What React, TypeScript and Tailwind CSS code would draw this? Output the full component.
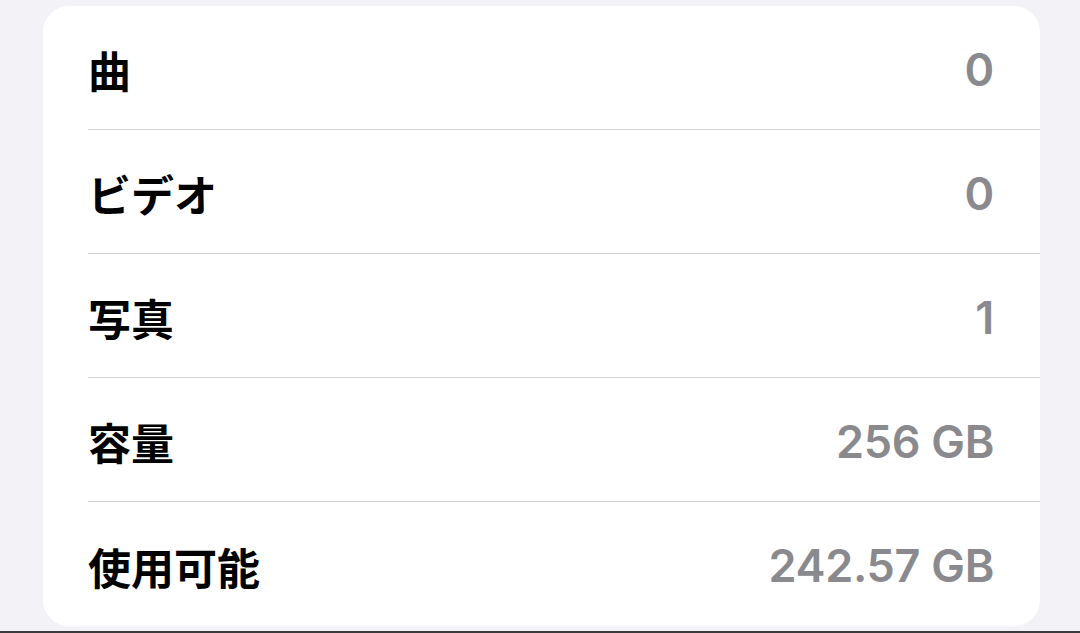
const rows = [
  { label: '曲', value: '0' },
  { label: 'ビデオ', value: '0' },
  { label: '写真', value: '1' },
  { label: '容量', value: '256 GB' },
  { label: '使用可能', value: '242.57 GB' },
];

export default function App() {
  return (
    <div className="flex h-[633px] w-[1080px] flex-col bg-[#f2f2f7]">
      <div className="flex-1 pt-[6px]">
        <div className="ml-[43px] w-[997px] overflow-hidden rounded-[26px] bg-white">
          {rows.map((row, i) => (
            <div key={row.label}>
              {i > 0 && <div className="ml-[45px] h-px bg-[#d1d1d6]" />}
              <div
                className={`flex items-center justify-between pl-[45px] pr-[46px] pt-[4px] ${
                  i === rows.length - 1 ? 'h-[124px]' : 'h-[123px]'
                }`}
              >
                <span className="text-[43px] font-bold text-black [font-family:'Noto_Sans_CJK_JP',sans-serif]">
                  {row.label}
                </span>
                <span className="text-[45px] font-semibold tracking-[-0.3px] text-[#8a8a8e] [font-family:Inter,sans-serif]">
                  {row.value}
                </span>
              </div>
            </div>
          ))}
        </div>
      </div>
      <div className="h-[2px] bg-[#3a3a3c]" />
    </div>
  );
}
